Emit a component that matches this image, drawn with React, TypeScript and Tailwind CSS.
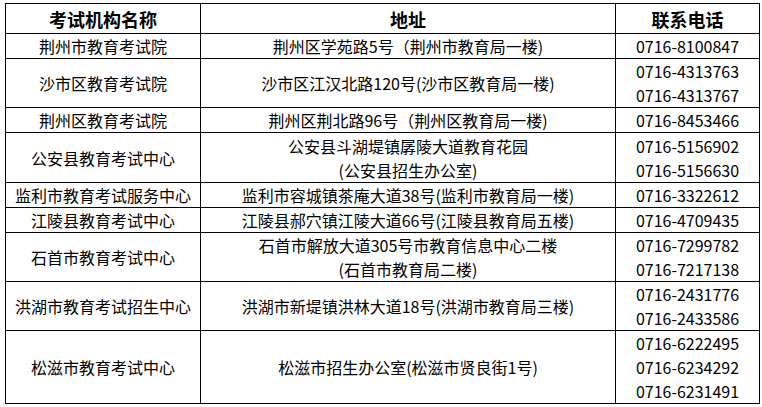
const rows: { name: string; addr: string[]; phones: string[]; h: string }[] = [
  { name: '荆州市教育考试院', addr: ['荆州区学苑路5号（荆州市教育局一楼)'], phones: ['0716-8100847'], h: 'h-[25px]' },
  { name: '沙市区教育考试院', addr: ['沙市区江汉北路120号(沙市区教育局一楼)'], phones: ['0716-4313763', '0716-4313767'], h: 'h-[49px]' },
  { name: '荆州区教育考试院', addr: ['荆州区荆北路96号（荆州区教育局一楼)'], phones: ['0716-8453466'], h: 'h-[25px]' },
  { name: '公安县教育考试中心', addr: ['公安县斗湖堤镇孱陵大道教育花园', '(公安县招生办公室)'], phones: ['0716-5156902', '0716-5156630'], h: 'h-[50px]' },
  { name: '监利市教育考试服务中心', addr: ['监利市容城镇茶庵大道38号(监利市教育局一楼)'], phones: ['0716-3322612'], h: 'h-[24px]' },
  { name: '江陵县教育考试中心', addr: ['江陵县郝穴镇江陵大道66号(江陵县教育局五楼)'], phones: ['0716-4709435'], h: 'h-[25px]' },
  { name: '石首市教育考试中心', addr: ['石首市解放大道305号市教育信息中心二楼', '(石首市教育局二楼)'], phones: ['0716-7299782', '0716-7217138'], h: 'h-[49px]' },
  { name: '洪湖市教育考试招生中心', addr: ['洪湖市新堤镇洪林大道18号(洪湖市教育局三楼)'], phones: ['0716-2431776', '0716-2433586'], h: 'h-[49px]' },
  { name: '松滋市教育考试中心', addr: ['松滋市招生办公室(松滋市贤良街1号)'], phones: ['0716-6222495', '0716-6234292', '0716-6231491'], h: 'h-[73px]' },
];

export default function App() {
  return (
    <div className="w-[762px] h-[407px] bg-white pl-[5px] pt-[3px] font-['Noto_Sans_CJK_SC',sans-serif] text-black">
      <table className="w-[754px] table-fixed border-collapse">
        <colgroup>
          <col className="w-[195px]" />
          <col className="w-[415px]" />
          <col className="w-[144px]" />
        </colgroup>
        <thead>
          <tr className="h-[30px]">
            <th className="border border-black p-0 text-[18px] font-bold leading-[26px]">考试机构名称</th>
            <th className="border border-black p-0 text-[18px] font-bold leading-[26px]">地址</th>
            <th className="border border-black p-0 text-[18px] font-bold leading-[26px]">联系电话</th>
          </tr>
        </thead>
        <tbody>
          {rows.map((r) => (
            <tr key={r.name} className={r.h}>
              <td className="border border-black p-0 text-center text-[16px] leading-[24px] whitespace-nowrap">{r.name}</td>
              <td className="border border-black p-0 text-center text-[16px] leading-[24px] whitespace-nowrap">
                {r.addr.map((a) => (
                  <div key={a}>{a}</div>
                ))}
              </td>
              <td className="border border-black p-0 text-center text-[16px] leading-[24px]">
                {r.phones.map((p) => (
                  <div key={p}>{p}</div>
                ))}
              </td>
            </tr>
          ))}
        </tbody>
      </table>
    </div>
  );
}
